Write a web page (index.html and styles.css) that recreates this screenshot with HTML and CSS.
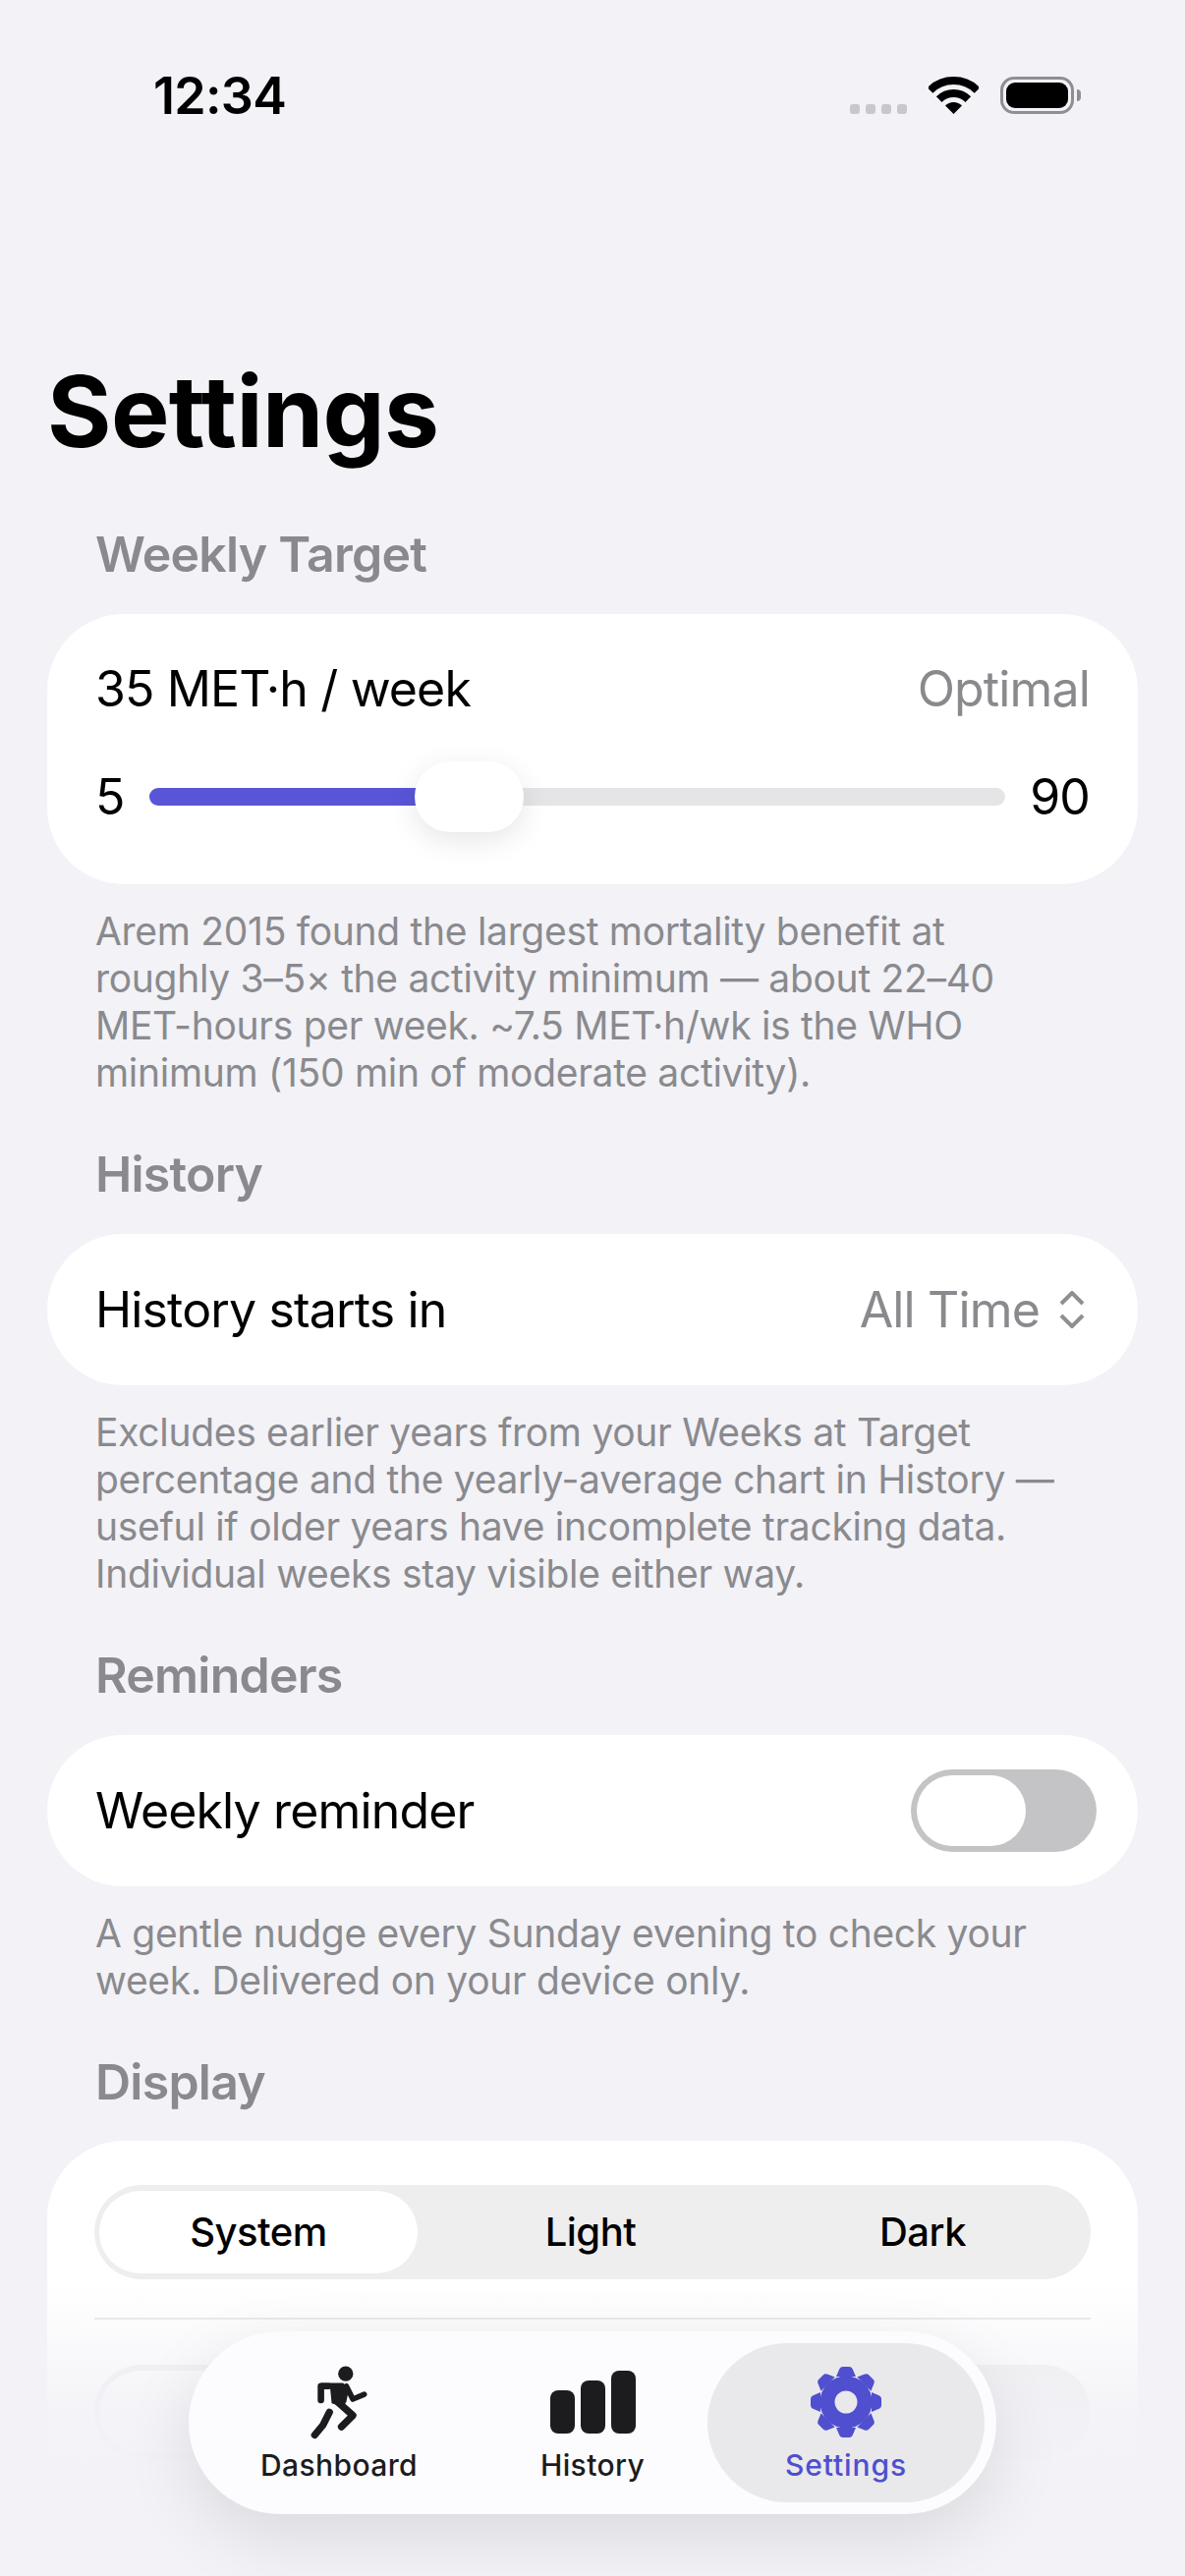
FILE: index.html
```html
<!DOCTYPE html>
<html lang="en">
<head>
    <meta charset="UTF-8">
    <meta name="viewport" content="width=device-width, initial-scale=1.0">
    <title>Settings</title>
    <link rel="stylesheet" href="styles.css">
</head>
<body>
    <div class="screen">
        <div class="status-bar">
            <span class="status-time">12:34</span>
            <div class="status-icons">
                <div class="signal-dots"><i></i><i></i><i></i><i></i></div>
                <svg class="wifi-icon" viewBox="0 0 51 38">
                    <path d="M1.5 14A34 34 0 0 1 49.5 14" fill="none" stroke="#000" stroke-width="8"/>
                    <path d="M10.7 23.2A21 21 0 0 1 40.3 23.2" fill="none" stroke="#000" stroke-width="8"/>
                    <path d="M25.5 38L17 29.5A12 12 0 0 1 34 29.5Z" fill="#000"/>
                </svg>
                <div class="battery"><div class="battery-level"></div></div>
                <div class="battery-cap"></div>
            </div>
        </div>

        <h1 class="page-title">Settings</h1>

        <section class="group">
            <h2 class="group-title">Weekly Target</h2>
            <div class="card target-card">
                <div class="row-between">
                    <span>35 MET·h / week</span>
                    <span class="muted">Optimal</span>
                </div>
                <div class="slider-row">
                    <span>5</span>
                    <div class="slider-track">
                        <div class="slider-fill"></div>
                        <div class="slider-thumb"></div>
                    </div>
                    <span>90</span>
                </div>
            </div>
            <p class="group-note">Arem 2015 found the largest mortality benefit at<br>roughly 3–5× the activity minimum — about 22–40<br>MET-hours per week. ~7.5 MET·h/wk is the WHO<br>minimum (150 min of moderate activity).</p>
        </section>

        <section class="group">
            <h2 class="group-title">History</h2>
            <div class="card row-card">
                <span>History starts in</span>
                <div class="picker">
                    <span class="muted">All Time</span>
                    <svg class="chevrons" viewBox="0 0 26 38">
                        <path d="M2 13L13 2L24 13M2 25L13 36L24 25" fill="none" stroke="#8e8e93" stroke-width="4"/>
                    </svg>
                </div>
            </div>
            <p class="group-note">Excludes earlier years from your Weeks at Target<br>percentage and the yearly-average chart in History —<br>useful if older years have incomplete tracking data.<br>Individual weeks stay visible either way.</p>
        </section>

        <section class="group">
            <h2 class="group-title">Reminders</h2>
            <div class="card row-card toggle-row">
                <span>Weekly reminder</span>
                <div class="toggle"><div class="toggle-knob"></div></div>
            </div>
            <p class="group-note">A gentle nudge every Sunday evening to check your<br>week. Delivered on your device only.</p>
        </section>

        <section class="group">
            <h2 class="group-title display-title">Display</h2>
            <div class="card display-card">
                <div class="segments">
                    <div class="segment selected">System</div>
                    <div class="segment">Light</div>
                    <div class="segment">Dark</div>
                </div>
                <div class="divider"></div>
                <div class="segments">
                    <div class="segment selected"></div>
                    <div class="segment"></div>
                    <div class="segment"></div>
                </div>
            </div>
        </section>

        <div class="bottom-fade"></div>

        <nav class="tab-bar">
            <div class="tab-item">
                <div class="tab-icon">
                    <svg class="run-icon" viewBox="0 0 175 225">
                        <circle cx="108" cy="24" r="23" fill="#1c1c1e"/>
                        <path d="M30 52L100 52L118 70L110 110L100 125L65 115L60 65Z" fill="#1c1c1e"/>
                        <path d="M55 62L32 62L32 105" fill="none" stroke="#1c1c1e" stroke-width="20" stroke-linecap="round" stroke-linejoin="round"/>
                        <path d="M110 62L130 102L165 87" fill="none" stroke="#1c1c1e" stroke-width="17" stroke-linecap="round" stroke-linejoin="round"/>
                        <path d="M85 112L130 152L95 187" fill="none" stroke="#1c1c1e" stroke-width="22" stroke-linecap="round" stroke-linejoin="round"/>
                        <path d="M58 142L38 182L13 212" fill="none" stroke="#1c1c1e" stroke-width="22" stroke-linecap="round" stroke-linejoin="round"/>
                    </svg>
                </div>
                <span>Dashboard</span>
            </div>
            <div class="tab-item">
                <div class="tab-icon">
                    <div class="bars-icon"><i class="bar-low"></i><i class="bar-mid"></i><i class="bar-high"></i></div>
                </div>
                <span>History</span>
            </div>
            <div class="tab-item active">
                <div class="tab-icon">
                    <svg class="gear-icon" viewBox="-37 -37 74 74" fill="#4f4fcf">
                        <circle r="19" fill="none" stroke="#4f4fcf" stroke-width="15"/>
                        <path id="tooth" d="M-10 -26L-7 -33Q-6 -36 -3 -36L3 -36Q6 -36 7 -33L10 -26Z"/>
                        <use href="#tooth" transform="rotate(45)"/>
                        <use href="#tooth" transform="rotate(90)"/>
                        <use href="#tooth" transform="rotate(135)"/>
                        <use href="#tooth" transform="rotate(180)"/>
                        <use href="#tooth" transform="rotate(225)"/>
                        <use href="#tooth" transform="rotate(270)"/>
                        <use href="#tooth" transform="rotate(315)"/>
                    </svg>
                </div>
                <span>Settings</span>
            </div>
        </nav>
    </div>
</body>
</html>
```

FILE: styles.css
```css
* {
    box-sizing: border-box;
}

body {
    margin: 0;
    font-family: 'Inter', 'Liberation Sans', sans-serif;
    background-color: #f2f2f7;
    color: #000;
}

.screen {
    position: relative;
    width: 1206px;
    height: 2622px;
    overflow: hidden;
}

/* status bar */
.status-bar {
    display: flex;
    justify-content: space-between;
    height: 196px;
    padding: 68px 106px 0 156px;
}

.status-time {
    font-size: 52px;
    font-weight: 600;
    line-height: 60px;
    letter-spacing: -0.7px;
}

.status-icons {
    display: flex;
    align-items: flex-start;
    height: 39px;
    margin-top: 10px;
}

.signal-dots {
    display: flex;
    gap: 6px;
    margin-top: 28px;
    margin-right: 22px;
}

.signal-dots i {
    width: 10px;
    height: 10px;
    border-radius: 3px;
    background-color: #c7c7cc;
}

.wifi-icon {
    width: 51px;
    height: 38px;
    margin-right: 22px;
}

.battery {
    width: 75px;
    height: 38px;
    padding: 3px;
    border: 3px solid #8e8e93;
    border-radius: 14px;
}

.battery-level {
    height: 100%;
    background-color: #000;
    border-radius: 9px;
}

.battery-cap {
    width: 4px;
    height: 12px;
    margin: 13px 0 0 3px;
    background-color: #8e8e93;
    border-radius: 0 4px 4px 0;
}

.page-title {
    margin: 168px 0 60px 48px;
    font-size: 100px;
    font-weight: 700;
    line-height: 110px;
    letter-spacing: -0.6px;
}

/* groups */
.group {
    padding: 0 48px;
}

.group-title {
    margin: 0 0 31px 49px;
    font-size: 50px;
    font-weight: 600;
    line-height: 60px;
    letter-spacing: -0.75px;
    color: #8a8a8e;
}

.display-title {
    margin-bottom: 30px;
}

.group-note {
    margin: 24px 0 49px 49px;
    font-size: 39px;
    line-height: 48px;
    letter-spacing: -0.3px;
    color: #8a8a8e;
}

.card {
    background-color: #fff;
    border-radius: 78px;
    font-size: 50px;
    line-height: 60px;
    letter-spacing: -0.85px;
}

.muted {
    color: #8a8a8e;
}

.target-card {
    height: 275px;
    padding: 46px 49px 0;
}

.row-between {
    display: flex;
    justify-content: space-between;
}

.slider-row {
    display: flex;
    align-items: center;
    gap: 25px;
    margin-top: 50px;
}

.slider-track {
    position: relative;
    flex-grow: 1;
    height: 18px;
    background-color: #e5e5e7;
    border-radius: 9px;
}

.slider-fill {
    width: 300px;
    height: 100%;
    background-color: #5856d6;
    border-radius: 9px 0 0 9px;
}

.slider-thumb {
    position: absolute;
    left: 270px;
    top: -27px;
    width: 111px;
    height: 72px;
    background-color: #fff;
    border-radius: 36px;
    box-shadow: 0 8px 30px rgba(0, 0, 0, 0.1);
}

.row-card {
    display: flex;
    justify-content: space-between;
    align-items: center;
    height: 154px;
    padding: 0 54px 0 49px;
}

.picker {
    display: flex;
    align-items: center;
    gap: 20px;
}

.chevrons {
    width: 26px;
    height: 38px;
}

.toggle-row {
    padding-right: 42px;
}

.toggle {
    width: 189px;
    height: 84px;
    padding: 6px;
    background-color: #c4c4c7;
    border-radius: 42px;
}

.toggle-knob {
    width: 111px;
    height: 72px;
    background-color: #fff;
    border-radius: 36px;
}

/* display card */
.display-card {
    height: 500px;
    padding: 45px 48px 0;
}

.segments {
    display: grid;
    grid-template-columns: repeat(3, 324px);
    gap: 14px;
    height: 96px;
    padding: 6px 5px;
    background-color: #eeeeef;
    border-radius: 48px;
}

.segment {
    display: flex;
    justify-content: center;
    align-items: center;
    font-size: 40px;
    font-weight: 450;
    letter-spacing: -0.5px;
}

.segment.selected {
    background-color: #fff;
    border-radius: 42px;
}

.divider {
    height: 2px;
    margin: 39px 0 46px;
    background-color: #e5e5e7;
}

.bottom-fade {
    position: absolute;
    left: 0;
    right: 0;
    bottom: 0;
    height: 300px;
    background: linear-gradient(to bottom, rgba(242, 242, 247, 0), rgba(242, 242, 247, 0.85) 45%, #f2f2f7 70%);
}

/* floating tab bar */
.tab-bar {
    position: absolute;
    left: 192px;
    top: 2373px;
    display: flex;
    width: 822px;
    height: 186px;
    padding: 12px 22px 12px 24px;
    background-color: #fcfcfe;
    border-radius: 93px;
    box-shadow: 0 24px 70px rgba(0, 0, 0, 0.1);
}

.tab-item {
    position: relative;
    display: flex;
    flex-direction: column;
    align-items: center;
    gap: 6px;
    width: 258px;
    padding-top: 20px;
    font-size: 30px;
    font-weight: 500;
    line-height: 36px;
    letter-spacing: 0.4px;
    color: #1c1c1e;
}

.tab-item.active {
    letter-spacing: 0.9px;
    color: #4f4fcf;
}

.tab-item.active::before {
    content: "";
    position: absolute;
    left: -12px;
    right: -12px;
    top: 0;
    bottom: 0;
    background-color: #e9e9eb;
    border-radius: 81px;
}

.tab-icon {
    position: relative;
    display: flex;
    justify-content: center;
    align-items: center;
    height: 80px;
}

.tab-item span {
    position: relative;
}

.run-icon {
    width: 58px;
    height: 75px;
}

.gear-icon {
    width: 74px;
    height: 74px;
}

.bars-icon {
    display: flex;
    align-items: flex-end;
    gap: 6px;
    height: 64px;
}

.bars-icon i {
    width: 25px;
    background-color: #1c1c1e;
    border-radius: 8px;
}

.bar-low {
    height: 44px;
}

.bar-mid {
    height: 54px;
}

.bar-high {
    height: 64px;
}
```
